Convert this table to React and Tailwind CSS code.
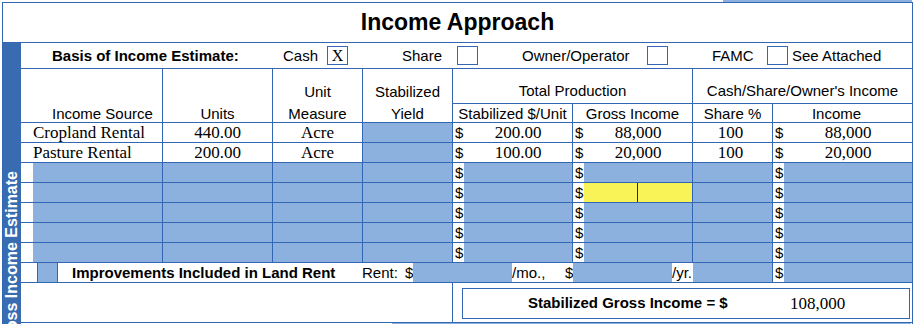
import React from "react";

const L = "border-[#3467b3]";
const FILL = "bg-[#8db1df]";
const GRID = "grid grid-cols-[142px_110px_90px_90px_120px_120px_80px_139px]";
const SERIF = "font-['Liberation_Serif',serif] text-[17px] leading-[19px]";

function Dollar({ value, fill = true, yellow = false, last = false }) {
  return (
    <div className={`flex h-[19px] overflow-hidden ${last ? "" : `border-r ${L}`}`}>
      <div className="w-[11px] shrink-0 bg-white pl-[2px] text-[15px] leading-[19px]">$</div>
      {yellow ? (
        <div className="flex flex-1">
          <div className="w-[53px] bg-[#f9f358]" />
          <div className="w-[1px] bg-[#1c2270]" />
          <div className="flex-1 bg-[#f9f358]" />
        </div>
      ) : (
        <div className={`flex flex-1 items-center justify-center ${fill ? FILL : "bg-white"} ${SERIF}`}>{value}</div>
      )}
    </div>
  );
}

function DataRow({ src, units, measure, unit, gross, share, income }) {
  return (
    <div className={`${GRID} h-[20px] grid-rows-[19px] border-b ${L}`}>
      <div className={`flex items-center border-r ${L} pl-[12px] ${SERIF}`}>{src}</div>
      <div className={`flex items-center justify-center border-r ${L} ${SERIF}`}>{units}</div>
      <div className={`flex items-center justify-center border-r ${L} ${SERIF}`}>{measure}</div>
      <div className={`border-r ${L} ${FILL}`} />
      <Dollar value={unit} fill={false} />
      <Dollar value={gross} fill={false} />
      <div className={`flex items-center justify-center border-r ${L} pr-[4px] ${SERIF}`}>{share}</div>
      <Dollar value={income} fill={false} last />
    </div>
  );
}

function BlueRow({ yellow = false }) {
  return (
    <div className={`${GRID} h-[20px] grid-rows-[19px] border-b ${L}`}>
      <div className={`border-r ${L} pl-[12px]`}>
        <div className={`h-full ${FILL}`} />
      </div>
      <div className={`border-r ${L} ${FILL}`} />
      <div className={`border-r ${L} ${FILL}`} />
      <div className={`border-r ${L} ${FILL}`} />
      <Dollar />
      <Dollar yellow={yellow} />
      <div className={`border-r ${L} ${FILL}`} />
      <Dollar last />
    </div>
  );
}

function Box({ children }) {
  return (
    <div className={`flex h-[19px] w-[21px] shrink-0 items-center justify-center border ${L} bg-white font-['Liberation_Serif',serif] text-[16px] leading-none`}>
      {children}
    </div>
  );
}

function TwoLine({ a, b, className = "" }) {
  return (
    <div className={`row-span-2 flex flex-col border-r ${L} ${className}`}>
      <div className="flex h-[35px] items-end justify-center pb-[4px] leading-[17px]">{a}</div>
      <div className="flex h-[18px] items-center justify-center leading-[17px]">{b}</div>
    </div>
  );
}

export default function App() {
  return (
    <div className="h-[324px] w-[917px] overflow-hidden bg-white font-['Liberation_Sans',Arial,sans-serif] text-black">
      <div className="flex h-[2px]">
        <div className="w-[723px]" />
        <div className={`w-[189px] ${FILL}`} />
      </div>
      <div className={`ml-[2px] w-[911px] border-l border-r border-t ${L}`}>
        <div className={`flex h-[40px] items-center justify-center border-b ${L} text-[23px] font-bold`}>
          Income Approach
        </div>
        <div className="flex">
          <div className="flex w-[18px] flex-col items-center justify-end overflow-hidden bg-[#386bb0]">
            <div className="mb-[-24px] rotate-180 whitespace-nowrap text-[16px] font-bold leading-[18px] text-white [writing-mode:vertical-rl]">
              Gross Income Estimate
            </div>
          </div>
          <div className="w-[891px]">
            {/* Basis row */}
            <div className={`flex h-[26px] items-center border-b ${L} text-[15px]`}>
              <div className="w-[262px] pl-[31px] pt-[2px] font-bold">Basis of Income Estimate:</div>
              <div className="w-[44px] pt-[2px]">Cash</div>
              <Box>X</Box>
              <div className="w-[54px]" />
              <div className="w-[55px] pt-[2px]">Share</div>
              <Box />
              <div className="w-[44px]" />
              <div className="w-[125px] pt-[2px]">Owner/Operator</div>
              <Box />
              <div className="w-[44px]" />
              <div className="w-[55px] pt-[2px]">FAMC</div>
              <Box />
              <div className="pl-[4px] pt-[2px]">See Attached</div>
            </div>

            {/* Header */}
            <div className={`${GRID} grid-rows-[35px_18px] border-b ${L} text-[15px]`}>
              <div className={`row-span-2 flex flex-col border-r ${L}`}>
                <div className="h-[35px]" />
                <div className="flex h-[18px] items-center pl-[31px] leading-[17px]">Income Source</div>
              </div>
              <TwoLine a="" b="Units" />
              <TwoLine a="Unit" b="Measure" />
              <TwoLine a="Stabilized" b="Yield" />
              <div className={`col-span-2 flex items-end justify-center border-b border-r ${L} pb-[4px] leading-[17px]`}>
                Total Production
              </div>
              <div className={`col-span-2 flex items-end justify-center border-b ${L} pb-[4px] leading-[17px]`}>
                Cash/Share/Owner's Income
              </div>
              <div className={`flex items-center justify-center border-r ${L} leading-[17px]`}>Stabilized $/Unit</div>
              <div className={`flex items-center justify-center border-r ${L} leading-[17px]`}>Gross Income</div>
              <div className={`flex items-center justify-center border-r ${L} leading-[17px]`}>Share %</div>
              <div className="flex items-center justify-center pr-[12px] leading-[17px]">Income</div>
            </div>

            <DataRow src="Cropland Rental" units="440.00" measure="Acre" unit="200.00" gross="88,000" share="100" income="88,000" />
            <DataRow src="Pasture Rental" units="200.00" measure="Acre" unit="100.00" gross="20,000" share="100" income="20,000" />
            <BlueRow />
            <BlueRow yellow />
            <BlueRow />
            <BlueRow />
            <BlueRow />

            {/* Improvements row */}
            <div className={`flex h-[20px] border-b ${L} text-[15px] leading-[19px]`}>
              <div className="w-[16px]" />
              <div className={`w-[21px] border-l border-r ${L} ${FILL}`} />
              <div className="w-[304px] pl-[14px] font-bold">Improvements Included in Land Rent</div>
              <div className="w-[43px]">Rent:</div>
              <div className="w-[8px]">$</div>
              <div className={`w-[99px] ${FILL}`} />
              <div className="w-[50px]">/mo.,</div>
              <div className="w-[11px] pl-[3px]">$</div>
              <div className={`w-[99px] ${FILL}`} />
              <div className="w-[21px]">/yr.</div>
              <div className={`w-[80px] border-r ${L} ${FILL}`} />
              <div className="w-[11px] pl-[2px]">$</div>
              <div className={`flex-1 ${FILL}`} />
            </div>

            {/* Bottom area */}
            <div className={`flex h-[40px] border-b ${L}`}>
              <div className={`w-[432px] border-r ${L}`} />
              <div className="flex-1 pl-[9px] pt-[5px]">
                <div className={`flex h-[31px] w-[448px] items-center border ${L}`}>
                  <div className="w-[327px] pl-[65px] text-[15px] font-bold">Stabilized Gross Income = $</div>
                  <div className={SERIF}>108,000</div>
                </div>
              </div>
            </div>
            <div className="flex h-[2px]">
              <div className="w-[371px]" />
              <div className={`w-[519px] ${FILL}`} />
            </div>
          </div>
        </div>
      </div>
    </div>
  );
}
